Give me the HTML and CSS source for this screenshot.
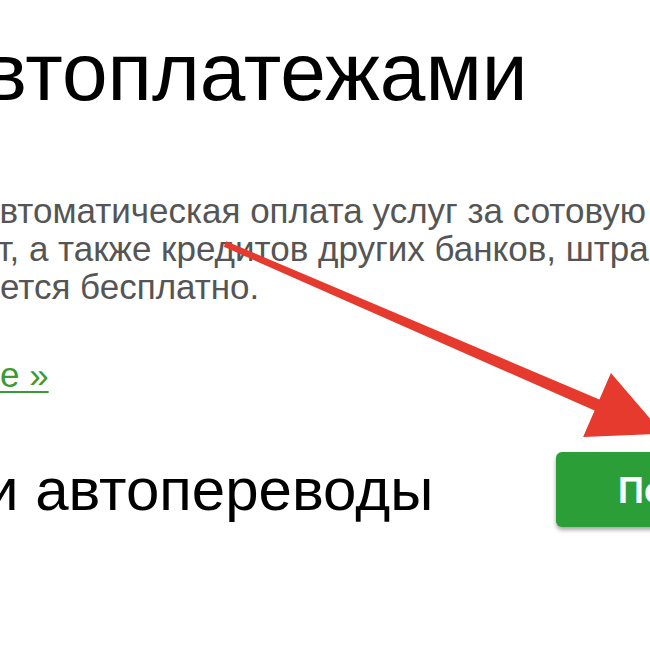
FILE: index.html
```html
<!DOCTYPE html>
<html lang="ru">
<head>
<meta charset="utf-8">
<link rel="stylesheet" href="styles.css">
</head>
<body>
<div class="page">
  <h1 class="title">автоплатежами</h1>
  <p class="text">
    <span class="line line-1">автоматическая оплата услуг за сотовую связь</span>
    <span class="line line-2">ет, а также кредитов других банков, штрафов</span>
    <span class="line line-3">яется бесплатно.</span>
  </p>
  <a class="more" href="#">е&nbsp;»</a>
  <div class="row">
    <h2 class="subtitle">и автопереводы</h2>
    <a class="btn" href="#">Подключить</a>
  </div>
  <svg class="arrow" width="650" height="650" viewBox="0 0 650 650">
    <polygon fill="#e63a2e" points="223.8,246.8 226.2,241.2 599.4,399.5 610.9,372.9 663,433.6 583.1,437.1 594.6,410.5"/>
  </svg>
</div>
</body>
</html>
```

FILE: styles.css
```css
html, body {
  margin: 0;
  padding: 0;
  background: #ffffff;
}
body {
  width: 650px;
  height: 650px;
  overflow: hidden;
  font-family: "Liberation Sans", Arial, sans-serif;
}
.page {
  position: relative;
  padding-top: 30px;
  width: 650px;
  height: 620px;
}
.title {
  margin: 0 0 0 -62px;
  font-size: 82px;
  line-height: 84px;
  font-weight: normal;
  color: #000;
  white-space: nowrap;
}
.text {
  margin: 78px 0 0 0;
  font-size: 35px;
  line-height: 38px;
  color: #555555;
}
.line {
  display: block;
  white-space: nowrap;
}
.line-1 { margin-left: -20px; }
.line-2 { margin-left: -21px; }
.line-3 { margin-left: -19px; }
.more {
  display: inline-block;
  margin-top: 50px;
  font-size: 35px;
  line-height: 38px;
  color: #3a9b35;
  text-decoration: underline;
  text-decoration-thickness: 2px;
  text-underline-offset: 4px;
}
.row {
  display: flex;
  align-items: center;
  margin-top: 58px;
  height: 75px;
}
.subtitle {
  flex: 0 0 571px;
  margin: 0 0 0 -15px;
  font-size: 60px;
  line-height: 60px;
  font-weight: normal;
  color: #000;
  white-space: nowrap;
}
.btn {
  flex: 0 0 auto;
  display: flex;
  align-items: center;
  height: 75px;
  padding: 2px 62px 0;
  box-sizing: border-box;
  background: #2b9e37;
  border-radius: 6px;
  box-shadow: 0 3px 4px rgba(0, 0, 0, 0.35);
  color: #ffffff;
  font-weight: bold;
  font-size: 36px;
  text-decoration: none;
  white-space: nowrap;
}
.arrow {
  position: absolute;
  left: 0;
  top: 0;
  pointer-events: none;
}
```
